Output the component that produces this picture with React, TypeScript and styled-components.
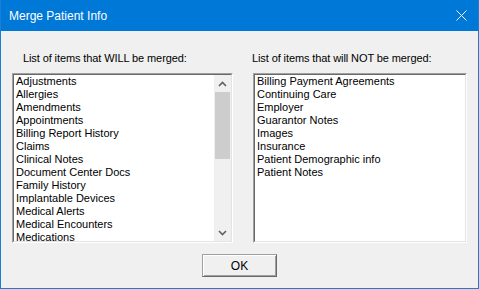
import React from 'react';
import styled, { createGlobalStyle } from 'styled-components';

const GlobalStyle = createGlobalStyle`
  html, body {
    margin: 0;
    padding: 0;
    background: #ffffff;
  }
`;

const Window = styled.div`
  box-sizing: border-box;
  width: 479px;
  height: 289px;
  display: flex;
  flex-direction: column;
  border: 1px solid #1a7fd4;
  border-top: none;
  background: #f0f0f0;
  overflow: hidden;
`;

const TitleBar = styled.div`
  height: 31px;
  flex: 0 0 31px;
  background: #0078d7;
  display: flex;
  align-items: center;
  justify-content: space-between;
  padding: 0 12px 0 9px;
  color: #ffffff;
  font-family: 'Liberation Sans', Arial, sans-serif;
  font-size: 12px;
  margin: 0 -1px;
`;

const CloseButton = styled.div`
  width: 12px;
  height: 12px;
  display: flex;
  align-items: center;
  justify-content: center;
`;

const Body = styled.div`
  flex: 1;
  display: flex;
  flex-direction: column;
  padding: 19px 11px 0 11px;
`;

const Columns = styled.div`
  display: grid;
  grid-template-columns: 221px 214px;
  column-gap: 20px;
`;

const Column = styled.div`
  display: flex;
  flex-direction: column;
`;

const Label = styled.div<{ $indent: number }>`
  font-family: 'Liberation Sans', Arial, sans-serif;
  font-size: 11px;
  letter-spacing: -0.1px;
  line-height: 16px;
  color: #000000;
  height: 16px;
  margin: 0 0 7px ${(p) => p.$indent}px;
  white-space: nowrap;
`;

const ListBox = styled.div`
  box-sizing: border-box;
  height: 170px;
  border-style: solid;
  border-width: 1px;
  border-color: #a0a0a0 #ffffff #ffffff #a0a0a0;
  display: flex;
`;

const ListFrame = styled.div`
  flex: 1;
  display: flex;
  border-style: solid;
  border-width: 1px;
  border-color: #696969 #e3e3e3 #e3e3e3 #696969;
  background: #ffffff;
  overflow: hidden;
`;

const Items = styled.div`
  flex: 1;
  padding: 0 0 0 2px;
  overflow: hidden;
`;

const Item = styled.div`
  font-family: 'Liberation Sans', Arial, sans-serif;
  font-size: 11px;
  line-height: 13px;
  height: 13px;
  color: #000000;
  white-space: nowrap;
`;

const ScrollBar = styled.div`
  width: 17px;
  flex: 0 0 17px;
  display: flex;
  flex-direction: column;
  background: #f0f0f0;
`;

const ScrollArrow = styled.div`
  height: 17px;
  flex: 0 0 17px;
  display: flex;
  align-items: center;
  justify-content: center;
`;

const ScrollTrack = styled.div`
  flex: 1;
  display: flex;
  flex-direction: column;
`;

const ScrollThumb = styled.div`
  height: 67px;
  margin: 0 1px;
  background: #cdcdcd;
`;

const Footer = styled.div`
  display: flex;
  justify-content: center;
  padding-top: 11px;
`;

const Button = styled.button`
  box-sizing: border-box;
  width: 75px;
  height: 23px;
  padding: 0;
  border-style: solid;
  border-width: 1px;
  border-color: #a0a0a0 #696969 #696969 #a0a0a0;
  box-shadow: inset 1px 1px 0 #ffffff, inset -1px -1px 0 #a0a0a0;
  background: #f0f0f0;
  font-family: 'Liberation Sans', Arial, sans-serif;
  font-size: 12px;
  color: #000000;
`;

const willMerge = [
  'Adjustments',
  'Allergies',
  'Amendments',
  'Appointments',
  'Billing Report History',
  'Claims',
  'Clinical Notes',
  'Document Center Docs',
  'Family History',
  'Implantable Devices',
  'Medical Alerts',
  'Medical Encounters',
  'Medications',
];

const wontMerge = [
  'Billing Payment Agreements',
  'Continuing Care',
  'Employer',
  'Guarantor Notes',
  'Images',
  'Insurance',
  'Patient Demographic info',
  'Patient Notes',
];

function Chevron({ up }: { up: boolean }) {
  return (
    <svg width="9" height="6" viewBox="0 0 9 6">
      <path
        d={up ? 'M1 5 L4.5 1.5 L8 5' : 'M1 1 L4.5 4.5 L8 1'}
        fill="none"
        stroke="#606060"
        strokeWidth="1.6"
      />
    </svg>
  );
}

function App() {
  return (
    <>
      <GlobalStyle />
      <Window>
        <TitleBar>
          <span>Merge Patient Info</span>
          <CloseButton>
            <svg width="11" height="11" viewBox="0 0 11 11">
              <path d="M0.5 0.5 L10.5 10.5 M10.5 0.5 L0.5 10.5" stroke="#ffffff" strokeWidth="1" />
            </svg>
          </CloseButton>
        </TitleBar>
        <Body>
          <Columns>
            <Column>
              <Label $indent={11}>List of items that WILL be merged:</Label>
              <ListBox>
                <ListFrame>
                  <Items>
                    {willMerge.map((name) => (
                      <Item key={name}>{name}</Item>
                    ))}
                  </Items>
                  <ScrollBar>
                    <ScrollArrow>
                      <Chevron up />
                    </ScrollArrow>
                    <ScrollTrack>
                      <ScrollThumb />
                    </ScrollTrack>
                    <ScrollArrow>
                      <Chevron up={false} />
                    </ScrollArrow>
                  </ScrollBar>
                </ListFrame>
              </ListBox>
            </Column>
            <Column>
              <Label $indent={-1}>List of items that will NOT be merged:</Label>
              <ListBox>
                <ListFrame>
                  <Items>
                    {wontMerge.map((name) => (
                      <Item key={name}>{name}</Item>
                    ))}
                  </Items>
                </ListFrame>
              </ListBox>
            </Column>
          </Columns>
          <Footer>
            <Button>OK</Button>
          </Footer>
        </Body>
      </Window>
    </>
  );
}

export default App;
